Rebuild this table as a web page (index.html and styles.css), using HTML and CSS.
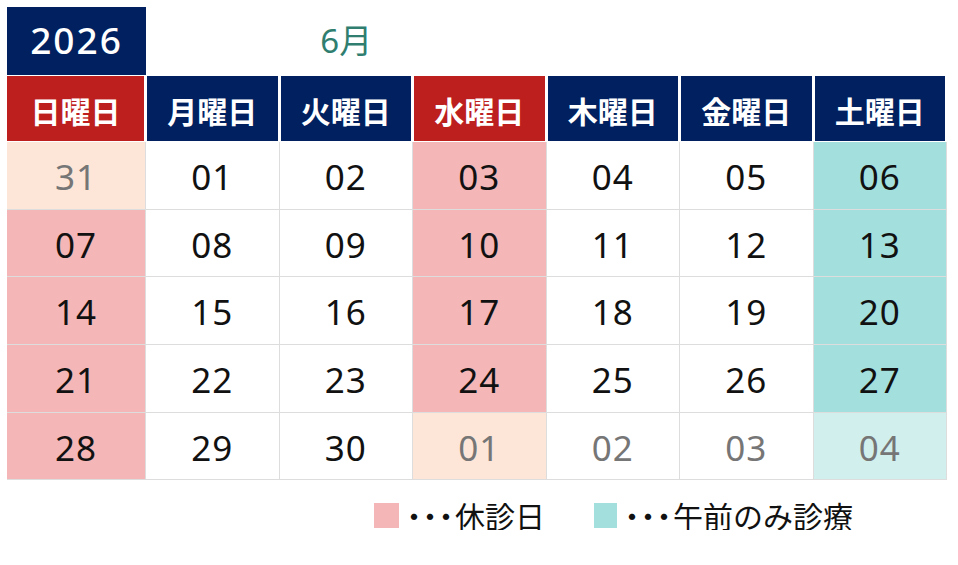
FILE: index.html
```html
<!DOCTYPE html>
<html lang="ja">
<head>
<meta charset="utf-8">
<title>2026年6月 診療カレンダー</title>
<link rel="stylesheet" href="styles.css">
</head>
<body>
<div class="cal">
  <div class="grid">
    <div class="year">2026</div>
    <div class="month">6月</div>

    <div class="hd red first">日曜日</div>
    <div class="hd">月曜日</div>
    <div class="hd">火曜日</div>
    <div class="hd red">水曜日</div>
    <div class="hd">木曜日</div>
    <div class="hd">金曜日</div>
    <div class="hd">土曜日</div>

    <div class="d peach out">31</div>
    <div class="d">01</div>
    <div class="d">02</div>
    <div class="d pink">03</div>
    <div class="d">04</div>
    <div class="d">05</div>
    <div class="d teal">06</div>

    <div class="d pink">07</div>
    <div class="d">08</div>
    <div class="d">09</div>
    <div class="d pink">10</div>
    <div class="d">11</div>
    <div class="d">12</div>
    <div class="d teal">13</div>

    <div class="d pink">14</div>
    <div class="d">15</div>
    <div class="d">16</div>
    <div class="d pink">17</div>
    <div class="d">18</div>
    <div class="d">19</div>
    <div class="d teal">20</div>

    <div class="d pink">21</div>
    <div class="d">22</div>
    <div class="d">23</div>
    <div class="d pink">24</div>
    <div class="d">25</div>
    <div class="d">26</div>
    <div class="d teal">27</div>

    <div class="d pink">28</div>
    <div class="d">29</div>
    <div class="d">30</div>
    <div class="d peach out">01</div>
    <div class="d out">02</div>
    <div class="d out">03</div>
    <div class="d lteal out">04</div>
  </div>

  <div class="legend">
    <div class="item">
      <span class="sq sq-pink"></span><span class="dots">・・・</span><span>休診日</span>
    </div>
    <div class="item">
      <span class="sq sq-teal"></span><span class="dots">・・・</span><span>午前のみ診療</span>
    </div>
  </div>
</div>
</body>
</html>
```

FILE: styles.css
```css
html, body {
  margin: 0;
  padding: 0;
  background: #ffffff;
}

.cal {
  padding: 7px 0 0 7px;
  font-family: "Noto Sans", "Noto Sans CJK JP", sans-serif;
}

.grid {
  display: grid;
  grid-template-columns: 139px repeat(6, 133.5px);
  grid-template-rows: 67.5px 67.5px repeat(5, 67.7px);
  width: 940px;
}

.year {
  grid-column: 1;
  background: #002060;
  color: #ffffff;
  font-size: 37px;
  font-weight: 500;
  letter-spacing: 2px;
  display: flex;
  align-items: center;
  justify-content: center;
  padding-bottom: 2px;
}

.month {
  grid-column: 2 / span 3;
  color: #2f7e70;
  font-family: "Noto Sans", "Noto Sans CJK JP", sans-serif;
  font-size: 33px;
  display: flex;
  align-items: center;
  justify-content: center;
  padding-bottom: 4px;
}

.hd {
  background: #002060;
  color: #ffffff;
  font-family: "Noto Sans CJK JP", sans-serif;
  font-weight: 700;
  font-size: 30px;
  display: flex;
  align-items: center;
  justify-content: center;
  border-left: 1px solid #ffffff;
  border-right: 2px solid #ffffff;
  border-top: 1px solid #ffffff;
  border-bottom: 1px solid #ffffff;
  padding-top: 4px;
}

.hd.first {
  grid-column: 1;
  border-left: 0;
}

.hd.red {
  background: #bd1e1e;
}

.d {
  display: flex;
  align-items: center;
  justify-content: center;
  font-size: 35px;
  letter-spacing: 1px;
  color: #111111;
  border-right: 1px solid #dddddd;
  border-bottom: 1px solid #dddddd;
  padding-top: 2px;
}

.d.out {
  color: #767676;
}

.pink {
  background: #f4b6b6;
}

.peach {
  background: #fde6d8;
}

.teal {
  background: #a3e0dd;
}

.lteal {
  background: #d1efed;
}

.legend {
  display: flex;
  gap: 49px;
  padding-left: 367px;
  margin-top: 20px;
  font-family: "Noto Sans CJK JP", sans-serif;
  font-size: 30px;
  color: #111111;
  line-height: 1;
}

.item {
  display: flex;
  align-items: center;
}

.sq {
  width: 25px;
  height: 25px;
  display: inline-block;
}

.sq-pink {
  background: #f4b6b6;
}

.sq-teal {
  background: #a3e0dd;
  width: 23px;
}

.dots {
  letter-spacing: -14px;
  margin-right: 8px;
}
```
